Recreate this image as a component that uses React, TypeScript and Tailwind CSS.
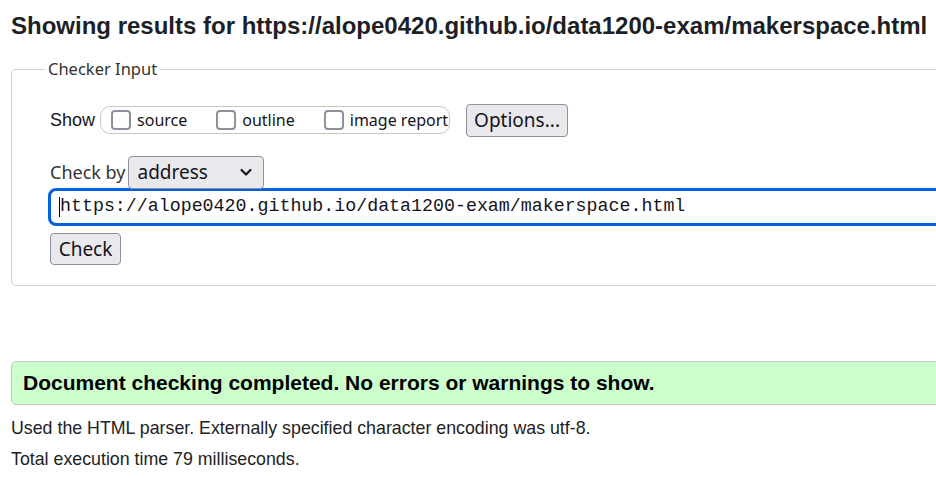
import React from 'react'

const ui = 'font-["Noto_Sans",sans-serif]'

function Box({label}: {label: string}) {
  return (
    <label className="flex items-center gap-[6px]">
      <span className="h-[20px] w-[20px] rounded-[4px] border-2 border-[#8f8f9d] bg-white" />
      <span className={`${ui} text-[16px] text-[#15141a]`}>{label}</span>
    </label>
  )
}

export default function App() {
  return (
    <div className="h-[478px] w-[936px] overflow-hidden bg-white">
      <div className="w-[1100px] pl-[11px] font-['Liberation_Sans',Arial,sans-serif] text-[#222]">
        <h2 className="pt-[12px] text-[24px] font-bold leading-[28px] text-[#1d1f26]">
          Showing results for https://alope0420.github.io/data1200-exam/makerspace.html
        </h2>

        <fieldset className="mt-[17px] h-[229px] rounded-[5px] border border-[#d0d0d0] pl-[38px]">
          <legend className={`${ui} -ml-[5px] px-[3px] text-[16.5px] text-[#333]`}>
            Checker Input
          </legend>

          <div className="mt-[22px] flex items-center">
            <span className="mr-[5px] text-[18px] text-[#15141a]">Show</span>
            <div className="flex h-[28px] w-[350px] items-center gap-[29px] rounded-[10px] border border-[#c8c8c8] pl-[10px]">
              <Box label="source" />
              <Box label="outline" />
              <Box label="image report" />
            </div>
            <button
              type="button"
              className={`${ui} ml-[16px] flex h-[33px] w-[102px] items-center justify-center rounded-[4px] border border-[#8f8f9d] bg-[#e9e9ed] text-[19px] text-[#15141a]`}
            >
              Options...
            </button>
          </div>

          <div className="mt-[19px] flex items-center">
            <span className={`${ui} mr-[3px] text-[18px] text-[#333]`}>Check by</span>
            <div className="flex h-[33px] w-[136px] items-center justify-between rounded-[4px] border border-[#8f8f9d] bg-[#e9e9ed] pl-[8px] pr-[10px]">
              <span className={`${ui} text-[19px] text-[#15141a]`}>address</span>
              <svg width="14" height="10" viewBox="0 0 14 10" fill="none" stroke="#15141a" strokeWidth="2.2" strokeLinecap="round" strokeLinejoin="round">
                <path d="M2.5 3l4.5 4.5L11.5 3" />
              </svg>
            </div>
          </div>

          <div className="-ml-[2px] -mt-[1px] flex h-[38px] items-center rounded-l-[8px] border-[3px] border-[#0060df] pl-[8px]">
            <span className="h-[20px] w-px bg-black" />
            <span className="font-['Liberation_Mono','DejaVu_Sans_Mono',monospace] text-[18.3px] text-[#15141a]">
              https://alope0420.github.io/data1200-exam/makerspace.html
            </span>
          </div>

          <button
            type="button"
            className={`${ui} mt-[7px] flex h-[32px] w-[71px] items-center justify-center rounded-[4px] border border-[#8f8f9d] bg-[#e9e9ed] text-[19px] text-[#15141a]`}
          >
            Check
          </button>
        </fieldset>

        <div className="mt-[75px] flex h-[44px] items-center rounded-l-[5px] border border-[#c8c8c8] bg-[#ccffcc] pl-[11px]">
          <span className="text-[21px] font-bold text-black">
            Document checking completed. No errors or warnings to show.
          </span>
        </div>

        <p className="mt-[11px] text-[17.8px] leading-[24px]">
          Used the HTML parser. Externally specified character encoding was utf-8.
        </p>
        <p className="mt-[7px] text-[17.8px] leading-[24px]">Total execution time 79 milliseconds.</p>
      </div>
    </div>
  )
}
